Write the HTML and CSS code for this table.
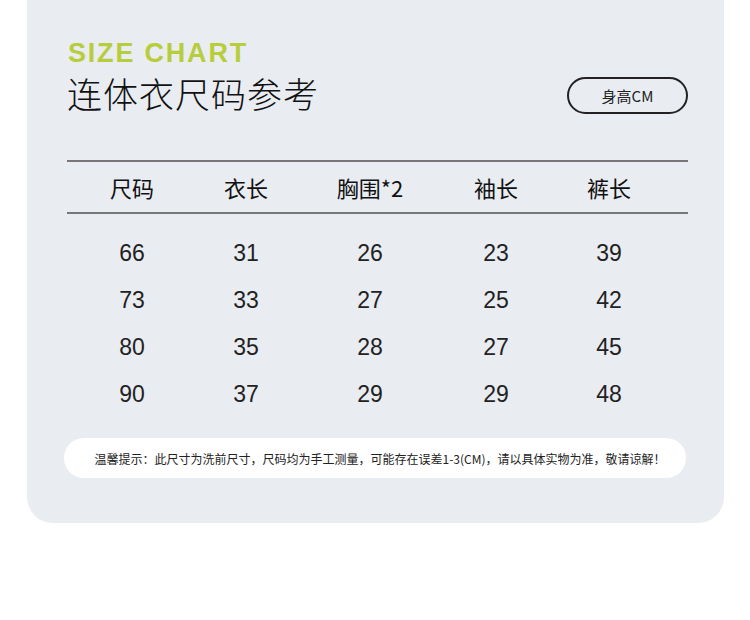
FILE: index.html
```html
<!DOCTYPE html>
<html lang="zh">
<head>
<meta charset="utf-8">
<link rel="stylesheet" href="styles.css">
</head>
<body>
<div class="card">
  <div class="head">
    <div class="titles">
      <div class="en">SIZE CHART</div>
      <div class="cn">连体衣尺码参考</div>
    </div>
    <div class="pill">身高CM</div>
  </div>
  <div class="table">
    <div class="row th">
      <div>尺码</div><div>衣长</div><div>胸围*2</div><div>袖长</div><div>裤长</div>
    </div>
    <div class="body">
      <div class="row"><div>66</div><div>31</div><div>26</div><div>23</div><div>39</div></div>
      <div class="row"><div>73</div><div>33</div><div>27</div><div>25</div><div>42</div></div>
      <div class="row"><div>80</div><div>35</div><div>28</div><div>27</div><div>45</div></div>
      <div class="row"><div>90</div><div>37</div><div>29</div><div>29</div><div>48</div></div>
    </div>
  </div>
  <div class="note">温馨提示：此尺寸为洗前尺寸，尺码均为手工测量，可能存在误差1-3(CM)，请以具体实物为准，敬请谅解！</div>
</div>
</body>
</html>
```
FILE: styles.css
```css
* { box-sizing: border-box; }
html, body { margin: 0; padding: 0; background: #fff; }
body { font-family: "Liberation Sans", "Noto Sans CJK SC", sans-serif; color: #1a1a1a; }
.card {
  margin-left: 27px;
  width: 697px;
  height: 523px;
  background: #e9ecf1;
  border-radius: 0 0 26px 26px;
  padding: 38px 36px 0 40px;
}
.head { display: flex; justify-content: space-between; align-items: flex-end; }
.en {
  font-family: "Liberation Sans", sans-serif;
  font-weight: bold;
  font-size: 27px;
  line-height: 30px;
  letter-spacing: 1.8px;
  color: #b8cd3c;
  margin-left: 1px;
}
.cn {
  font-family: "Noto Sans CJK SC", sans-serif;
  font-weight: 300;
  font-size: 35px;
  line-height: 44px;
  color: #111;
  margin-top: 3px;
  letter-spacing: 1px;
}
.pill {
  width: 121px;
  height: 37px;
  border: 2px solid #222;
  border-radius: 19px;
  display: flex; align-items: center; justify-content: center;
  font-family: "Noto Sans CJK SC", sans-serif;
  font-size: 15px;
  color: #222;
  margin-bottom: 1px;
}
.table { margin-top: 45px; width: 621px; }
.row {
  display: grid;
  grid-template-columns: 130px 98px 150px 102px 124px;
  text-align: center;
}
.th {
  border-top: 2px solid #777;
  border-bottom: 2px solid #777;
  height: 54px;
  align-items: center;
  font-family: "Noto Sans CJK SC", sans-serif;
  font-size: 22px;
  font-weight: 400;
  color: #111;
}
.body { padding-top: 16px; }
.body .row { height: 47px; align-items: center; font-size: 23px; color: #222; }
.note {
  margin-top: 20px;
  margin-left: -3px;
  width: 622px;
  height: 40px;
  background: #fff;
  border-radius: 20px;
  display: flex; align-items: center; justify-content: center;
  font-family: "Noto Sans CJK SC", sans-serif;
  font-size: 12px;
  color: #222;
  padding-left: 10px;
}
```
